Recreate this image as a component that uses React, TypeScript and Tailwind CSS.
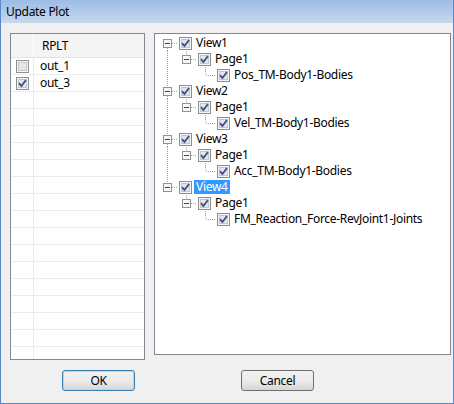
import React from "react";

type Node = {
  label: string;
  kind: "view" | "page" | "leaf";
  first?: boolean;
  lastView?: boolean;
  underLast?: boolean;
  selected?: boolean;
};

const tree: Node[] = [
  { label: "View1", kind: "view", first: true },
  { label: "Page1", kind: "page" },
  { label: "Pos_TM-Body1-Bodies", kind: "leaf" },
  { label: "View2", kind: "view" },
  { label: "Page1", kind: "page" },
  { label: "Vel_TM-Body1-Bodies", kind: "leaf" },
  { label: "View3", kind: "view" },
  { label: "Page1", kind: "page" },
  { label: "Acc_TM-Body1-Bodies", kind: "leaf" },
  { label: "View4", kind: "view", lastView: true, selected: true },
  { label: "Page1", kind: "page", underLast: true },
  { label: "FM_Reaction_Force-RevJoint1-Joints", kind: "leaf", underLast: true },
];

const font = { fontFamily: '"Noto Sans", "Open Sans", Arial, sans-serif' };

function CheckBox({ checked }: { checked: boolean }) {
  return (
    <svg width="13" height="13" viewBox="0 0 13 13" className="shrink-0">
      <rect x="0.5" y="0.5" width="12" height="12" fill="#f4f4f4" stroke="#8e8f8f" />
      <rect x="2.5" y="2.5" width="8" height="8" fill="#e4e6ea" stroke="#c4c7cc" />
      {checked && (
        <path d="M3 6.2 L5.4 9 L10 3" fill="none" stroke="#3b4f8a" strokeWidth="1.8" />
      )}
    </svg>
  );
}

function Expander() {
  return (
    <>
      <rect x="5.5" y="4.5" width="8" height="8" fill="#f7f7f7" stroke="#919191" />
      <line x1="7" y1="8.5" x2="12" y2="8.5" stroke="#3c4656" />
    </>
  );
}

const dot = { stroke: "#a0a0a0", strokeDasharray: "1 1" };

function Cell({ children }: { children?: React.ReactNode }) {
  return (
    <svg width="19" height="16" viewBox="0 0 19 16" className="shrink-0">
      {children}
    </svg>
  );
}

function TreeRow({ n }: { n: Node }) {
  let c0: React.ReactNode = null;
  let c1: React.ReactNode = null;
  let c2: React.ReactNode = null;

  if (n.kind === "view") {
    c0 = (
      <Cell>
        {!n.first && <line x1="9.5" y1="0" x2="9.5" y2="4" {...dot} />}
        {!n.lastView && <line x1="9.5" y1="13" x2="9.5" y2="16" {...dot} />}
        <line x1="14" y1="8.5" x2="19" y2="8.5" {...dot} />
        <Expander />
      </Cell>
    );
  } else {
    c0 = <Cell>{!n.underLast && <line x1="9.5" y1="0" x2="9.5" y2="16" {...dot} />}</Cell>;
    if (n.kind === "page") {
      c1 = (
        <Cell>
          <line x1="9.5" y1="0" x2="9.5" y2="4" {...dot} />
          <line x1="14" y1="8.5" x2="19" y2="8.5" {...dot} />
          <Expander />
        </Cell>
      );
    } else {
      c1 = <Cell />;
      c2 = (
        <Cell>
          <line x1="9.5" y1="0" x2="9.5" y2="8" {...dot} />
          <line x1="10" y1="8.5" x2="19" y2="8.5" {...dot} />
        </Cell>
      );
    }
  }

  return (
    <div className="flex h-[16px] items-center">
      {c0}
      {c1}
      {c2}
      <span className="ml-[2px]">
        <CheckBox checked />
      </span>
      {n.selected ? (
        <span className="ml-[2px] flex h-[14px] items-center bg-[#3399ff] px-[2px] text-white">
          {n.label}
        </span>
      ) : (
        <span className="ml-[4px] whitespace-nowrap">{n.label}</span>
      )}
    </div>
  );
}

function WinButton({ label, focused }: { label: string; focused?: boolean }) {
  return (
    <button
      className={`flex h-[21px] w-[73px] items-center justify-center rounded-[3px] border bg-gradient-to-b from-[#f2f2f2] via-[#ebebeb] to-[#d6d6d6] text-[12px] text-black ${
        focused ? "border-[#3c7fb1] shadow-[inset_0_0_0_1px_#a6dcf6]" : "border-[#707070]"
      }`}
    >
      {label}
    </button>
  );
}

export default function App() {
  const outputs = [
    { name: "out_1", checked: false },
    { name: "out_3", checked: true },
  ];
  const blank = Array.from({ length: 16 });

  return (
    <div
      className="flex h-[404px] w-[454px] flex-col overflow-hidden border-x border-b border-[#5a8ac6] bg-[#f0f0f0] text-[12px] tracking-[-0.3px] text-black"
      style={font}
    >
      <div className="flex h-[23px] shrink-0 items-center bg-gradient-to-b from-[#9dbce3] to-[#c6d9ef] pl-[5px] text-[12px]">
        Update Plot
      </div>

      <div className="flex pt-[10px] pl-[9px]">
        <div className="flex flex-col">
          <div className="flex h-[327px] w-[135px] flex-col overflow-hidden border border-[#828790] bg-white">
            <div className="flex h-[24px] shrink-0 border-b border-[#e3e3e3] bg-[#f4f4f4]">
              <div className="w-[23px] border-r border-white" />
              <div className="flex items-center pl-[8px]">RPLT</div>
            </div>
            {outputs.map((o) => (
              <div key={o.name} className="flex h-[17px] shrink-0 border-b border-[#ececec]">
                <div className="flex w-[23px] items-center justify-center border-r border-[#ececec]">
                  <CheckBox checked={o.checked} />
                </div>
                <div className="flex items-center pl-[6px]">{o.name}</div>
              </div>
            ))}
            {blank.map((_, i) => (
              <div key={i} className="flex h-[17px] shrink-0 border-b border-[#ececec]">
                <div className="w-[23px] border-r border-[#ececec]" />
              </div>
            ))}
          </div>
          <div className="mt-[10px] ml-[52px]">
            <WinButton label="OK" focused />
          </div>
        </div>

        <div className="ml-[9px] flex flex-col">
          <div className="h-[322px] w-[297px] border border-[#828790] bg-white pt-[1px] pl-[3px]">
            {tree.map((n, i) => (
              <TreeRow key={i} n={n} />
            ))}
          </div>
          <div className="mt-[15px] ml-[87px]">
            <WinButton label="Cancel" />
          </div>
        </div>
      </div>
    </div>
  );
}
